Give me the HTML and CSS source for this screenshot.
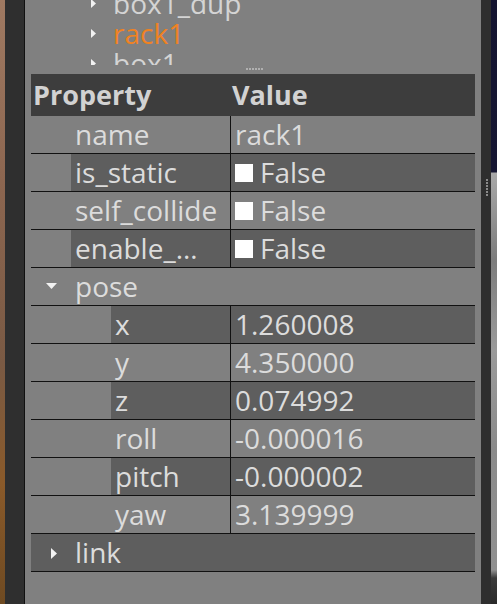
FILE: index.html
```html
<!DOCTYPE html>
<html>
<head>
<meta charset="utf-8">
<link rel="stylesheet" href="styles.css">
</head>
<body>
<div class="screen">
  <div class="wall-left"></div>
  <div class="dock-left"></div>
  <div class="panel">
    <div class="tree">
      <div class="tree-inner">
        <div class="tree-item"><svg class="tarrow" viewBox="0 0 5 9"><path d="M0 0L5 4.5L0 9Z"/></svg><span>box1_dup</span></div>
        <div class="tree-item sel"><svg class="tarrow" viewBox="0 0 5 9"><path d="M0 0L5 4.5L0 9Z"/></svg><span>rack1</span></div>
        <div class="tree-item"><svg class="tarrow" viewBox="0 0 5 9"><path d="M0 0L5 4.5L0 9Z"/></svg><span>box1</span></div>
      </div>
    </div>
    <div class="hsplit"><span class="hdots"></span></div>
    <div class="table">
      <div class="head">
        <div class="hcell hlabel">Property</div>
        <div class="hcell">Value</div>
      </div>
      <div class="row">
        <div class="indent i1"></div>
        <div class="label">name</div>
        <div class="value">rack1</div>
      </div>
      <div class="row alt">
        <div class="indent i1"></div>
        <div class="label">is_static</div>
        <div class="value"><span class="check"></span>False</div>
      </div>
      <div class="row">
        <div class="indent i1"></div>
        <div class="label">self_collide</div>
        <div class="value"><span class="check"></span>False</div>
      </div>
      <div class="row alt">
        <div class="indent i1"></div>
        <div class="label">enable_…</div>
        <div class="value"><span class="check"></span>False</div>
      </div>
      <div class="row group">
        <div class="branch"><svg class="down" viewBox="0 0 11 6"><path d="M0 0H11L5.5 6Z"/></svg></div>
        <div class="glabel">pose</div>
      </div>
      <div class="row alt">
        <div class="indent i2"></div>
        <div class="label sub">x</div>
        <div class="value">1.260008</div>
      </div>
      <div class="row">
        <div class="indent i2"></div>
        <div class="label sub">y</div>
        <div class="value">4.350000</div>
      </div>
      <div class="row alt">
        <div class="indent i2"></div>
        <div class="label sub">z</div>
        <div class="value">0.074992</div>
      </div>
      <div class="row">
        <div class="indent i2"></div>
        <div class="label sub">roll</div>
        <div class="value">-0.000016</div>
      </div>
      <div class="row alt">
        <div class="indent i2"></div>
        <div class="label sub">pitch</div>
        <div class="value">-0.000002</div>
      </div>
      <div class="row">
        <div class="indent i2"></div>
        <div class="label sub">yaw</div>
        <div class="value">3.139999</div>
      </div>
      <div class="row group galt">
        <div class="branch"><svg class="right" viewBox="0 0 6 11"><path d="M0 0L6 5.5L0 11Z"/></svg></div>
        <div class="glabel">link</div>
      </div>
    </div>
  </div>
  <div class="splitter"><span class="vdots"></span></div>
  <div class="wall-right"></div>
</div>
</body>
</html>
```

FILE: styles.css
```css
html, body {
  margin: 0;
  padding: 0;
  background: #808080;
}
.screen {
  display: flex;
  width: 497px;
  height: 604px;
  overflow: hidden;
  font-family: "Open Sans", "Noto Sans", sans-serif;
  font-size: 28px;
  color: #dcdcdc;
}
.wall-left {
  width: 5px;
  background: linear-gradient(180deg, #a07a62 0%, #8c6650 30%, #7a5a44 60%, #8a5a2a 80%, #6e4a22 100%);
}
.dock-left {
  width: 19px;
  background: #2f2f2f;
  border-right: 1px solid #111;
}
.panel {
  flex: 1;
  background: #808080;
  padding: 0 6px;
  display: flex;
  flex-direction: column;
}
.tree {
  height: 65px;
  overflow: hidden;
}
.tree-inner {
  margin-top: -12px;
  padding-left: 60px;
}
.tree-item {
  height: 30px;
  line-height: 30px;
  display: flex;
  align-items: center;
}
.tree-item span {
  margin-left: 17px;
  color: #d4d4d4;
}
.tree-item.sel span {
  color: #f08222;
}
.tarrow {
  width: 5px;
  height: 9px;
  fill: #f2f2f2;
}
.hsplit {
  height: 9px;
  position: relative;
}
.hdots {
  position: absolute;
  left: 215px;
  top: 3px;
  width: 17px;
  height: 2px;
  background: repeating-linear-gradient(90deg, #b0b0b0 0 2px, transparent 2px 3px);
}
.table {
  display: flex;
  flex-direction: column;
  width: 444px;
}
.head {
  display: flex;
  height: 42px;
  line-height: 42px;
  background: #3d3d3d;
  font-weight: 700;
  font-size: 27px;
  color: #d2d2d2;
}
.hcell {
  padding-left: 2px;
}
.hlabel {
  width: 197px;
}
.row {
  display: flex;
  height: 37px;
  line-height: 37px;
  border-bottom: 1px solid #111;
}
.indent.i1 { width: 40px; }
.indent.i2 { width: 80px; }
.label {
  flex: 1;
  padding-left: 4px;
  border-right: 1px solid #111;
  white-space: nowrap;
}
.value {
  width: 244px;
  padding-left: 4px;
  box-sizing: border-box;
  display: flex;
  align-items: center;
}
.row.alt .label,
.row.alt .value {
  background: #5e5e5e;
}
.check {
  width: 18px;
  height: 18px;
  background: #ffffff;
  margin-right: 7px;
  margin-top: 1px;
}
.row.group .branch {
  width: 40px;
  display: flex;
  align-items: center;
}
.row.group.galt {
  background: #5e5e5e;
}
.down {
  width: 11px;
  height: 6px;
  fill: #f2f2f2;
  margin-left: 15px;
  margin-top: -2px;
}
.right {
  width: 6px;
  height: 11px;
  fill: #f2f2f2;
  margin-left: 20px;
  margin-top: 2px;
}
.glabel {
  padding-left: 4px;
}
.splitter {
  width: 10px;
  background: #2e2e2e;
  position: relative;
}
.vdots {
  position: absolute;
  left: 5px;
  top: 179px;
  width: 2px;
  height: 18px;
  background: repeating-linear-gradient(180deg, #8a8a8a 0 2px, transparent 2px 3px);
}
.wall-right {
  width: 6px;
  background: linear-gradient(180deg, #141430 0, #161632 172px, #a8a8a8 173px, #7c7c7c 260px, #9a9a9a 350px, #8a8a8a 450px, #909090 570px, #3a3a3a 578px, #2a2a2a 604px);
}
```
